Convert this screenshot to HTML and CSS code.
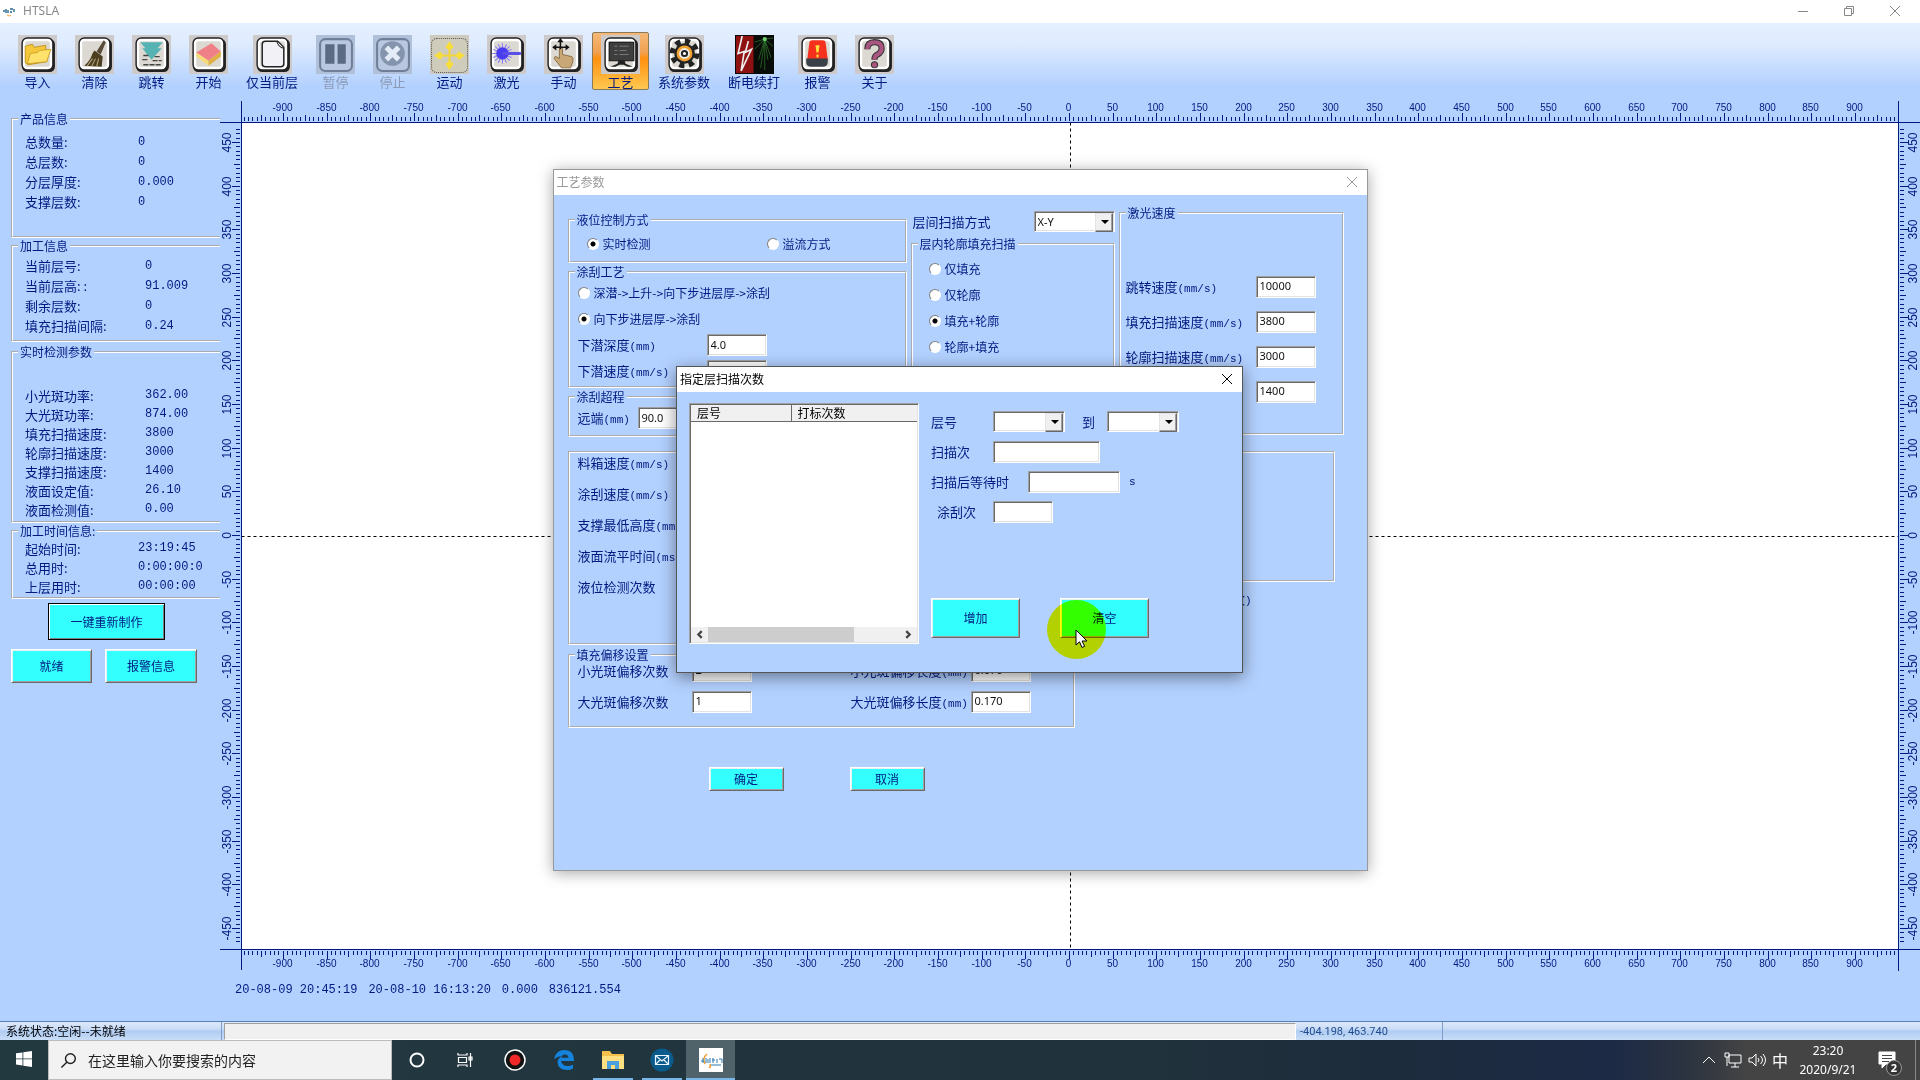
FILE: index.html
```html
<!DOCTYPE html>
<html lang="zh-CN">
<head>
<meta charset="utf-8">
<title>HTSLA</title>
<link rel="stylesheet" href="styles.css">
</head>
<body>
<svg class="defs" aria-hidden="true">
  <symbol id="frame" viewBox="0 0 38 38">
    <rect width="38" height="38" fill="#cfcaca"/>
    <rect x="4" y="4" width="32" height="32" rx="5" fill="#222"/>
    <rect x="4" y="3" width="30" height="31" rx="5" fill="#fff" stroke="#222" stroke-width="1.4"/>
    <rect x="7" y="6" width="24" height="25" rx="2" fill="#dcd9d2"/>
  </symbol>
</svg>

<div class="app">
  <header class="titlebar">
    <svg class="logo" viewBox="0 0 14 12"><path d="M1 6h2M4 4v4M6 5v3M8 4h3M8 7h2M12 4v3" stroke="#2a6a94" stroke-width="1.4"/><path d="M5 10q3 2 4 0" stroke="#f0a030" fill="none"/></svg>
    <span class="app-name">HTSLA</span>
    <div class="win-controls">
      <button type="button" aria-label="最小化"><svg viewBox="0 0 12 12"><path d="M1 6.500h10"/></svg></button>
      <button type="button" aria-label="还原"><svg viewBox="0 0 12 12"><path d="M1.500 3.500h7v7h-7zM3.500 3.500v-2h7v7h-2"/></svg></button>
      <button type="button" aria-label="关闭"><svg viewBox="0 0 12 12"><path d="M1 1l10 10M11 1L1 11"/></svg></button>
    </div>
  </header>

  <nav class="toolbar">
    <button type="button" class="tool"><svg viewBox="0 0 38 38"><use href="#frame"/><path d="M7 27V11l7-2 2 3 11-2v4l3 1-2 11-18 3z" fill="#f4c83a" stroke="#b98a12" stroke-width=".8"/><path d="M9 28l3-10 7-1 2-2 11-1-4 12z" fill="#ffe26b" stroke="#c79a20" stroke-width=".8"/></svg>导入</button>
    <button type="button" class="tool"><svg viewBox="0 0 38 38"><use href="#frame"/><path d="M28 5l2 2-5 12-4-3z" fill="#5a4a38"/><path d="M19 15l8 6-1 10-17-1q6-5 8-12z" fill="#4b3f20"/><path d="M12 30l5-7M16 31l4-8M21 31l2-8" stroke="#b8ab82"/></svg>清除</button>
    <button type="button" class="tool"><svg viewBox="0 0 38 38"><use href="#frame"/><path d="M8 7h22l-5 6h4L19 24 10 13h3z" fill="#55b3b3"/><path d="M11 20h5M10 24h6M22 21h6M20 25h9M11 29h17" stroke="#444" stroke-width="1.300" stroke-dasharray="5 1"/></svg>跳转</button>
    <button type="button" class="tool"><svg viewBox="0 0 38 38"><use href="#frame"/><path d="M7 17l15-9 9 8-12 9z" fill="#f08088"/><path d="M7 17l12 8v5L7 21z" fill="#f6dc78"/><path d="M19 25l12-9v5l-12 9z" fill="#e0b040"/></svg>开始</button>
    <button type="button" class="tool wide"><svg viewBox="0 0 38 38"><use href="#frame"/><path d="M12 6h12l6 6v16q0 3-3 3H12q-3 0-3-3V9q0-3 3-3z" fill="#f2f2f6" stroke="#222" stroke-width="1.400"/><path d="M23 6q2 6 7 7" fill="#fff" stroke="#222"/></svg>仅当前层</button>
    <button type="button" class="tool" disabled><svg viewBox="0 0 38 38"><rect width="38" height="38" fill="#b0c0d8"/><rect x="4" y="4" width="31" height="31" rx="5" fill="#b9c8e0" stroke="#6f7f98" stroke-width="2"/><path d="M9 9h9v19H9zM21 9h8v19h-8z" fill="#5c6b84"/></svg>暂停</button>
    <button type="button" class="tool" disabled><svg viewBox="0 0 38 38"><rect width="38" height="38" fill="#b0c0d8"/><rect x="4" y="4" width="31" height="31" rx="5" fill="#b9c8e0" stroke="#6f7f98" stroke-width="2"/><circle cx="19" cy="18" r="12" fill="#8494ac"/><path d="M13 12l12 12M25 12L13 24" stroke="#e4ecf8" stroke-width="5"/></svg>停止</button>
    <button type="button" class="tool"><svg viewBox="0 0 38 38"><rect width="38" height="38" fill="#cfcac0"/><rect x="1.500" y="3.500" width="35" height="33" rx="5" fill="#d0ccbc" stroke="#555" stroke-dasharray="1 1"/><path d="M19 9v22M8 20h22" stroke="#f2d43c" stroke-width="2"/><path d="M19 6l4 6-4 3-4-3zM19 34l4-6-4-3-4 3zM4 20l6-4 3 4-3 4zM34 20l-6-4-3 4 3 4z" fill="#f8de3a"/></svg>运动</button>
    <button type="button" class="tool"><svg viewBox="0 0 38 38"><use href="#frame"/><path d="M15 8v20M5 18h10M8 11l14 14M22 11L8 25M11 9l8 18M19 9l-8 18M6 14l18 8M24 14L6 22" stroke="#8a7cf0"/><circle cx="15" cy="18" r="6" fill="#4a3cf0"/><path d="M15 18h18" stroke="#5a50e8" stroke-width="3"/></svg>激光</button>
    <button type="button" class="tool"><svg viewBox="0 0 38 38"><use href="#frame"/><path d="M15 13q2-2 3 0v6l9 2q2 1 1 5l-2 6H17l-7-9q0-4 5 0z" fill="#c9a777" stroke="#7b6036" stroke-width=".8"/><path d="M16 6v8M10 12h13" stroke="#111" stroke-width="1.500"/><path d="M16 3l3 4h-6zM8 12l4-3v6zM25 12l-4-3v6z" fill="#111"/></svg>手动</button>
    <button type="button" class="tool active"><svg viewBox="0 0 38 38"><use href="#frame"/><path d="M8 7h24v18H8z" fill="#3e3e3e" stroke="#111"/><path d="M13 11h3M18 11h9M13 15h3M18 15h7M13 19h3M18 19h9" stroke="#777"/><path d="M17 25h6l1 3 7 3h-5l-4-2h-4l-4 2H9l7-3z" fill="#222"/></svg>工艺</button>
    <button type="button" class="tool wide"><svg viewBox="0 0 38 38"><use href="#frame"/><circle cx="19" cy="18" r="12" fill="none" stroke="#222" stroke-width="5" stroke-dasharray="5 4.420"/><circle cx="19" cy="18" r="10" fill="#222"/><circle cx="19" cy="18" r="6.500" fill="#eee" stroke="#f0a030" stroke-width="2.500"/><circle cx="19" cy="18" r="3.500" fill="#222"/><circle cx="19" cy="18" r="1.500" fill="#fff"/></svg>系统参数</button>
    <button type="button" class="tool wide"><svg viewBox="0 0 38 38"><path d="M0 0h38v38H0z" fill="#080c08"/><path d="M1 1h17v36H1z" fill="#8f1212"/><path d="M7 1L3 18l6-2-3 19 10-21-6 3 3-11" fill="none" stroke="#eee" stroke-width="1.600"/><path d="M29 4L19 14M29 4l-6 20M29 4v30M29 4l6 18M29 4l8 7M29 4l-10 3M29 4l8-1M29 4l3 20M29 4l-4 28" stroke="#2f7a2f" stroke-width=".7"/><circle cx="29" cy="4" r="2" fill="#6ed06e"/></svg>断电续打</button>
    <button type="button" class="tool"><svg viewBox="0 0 38 38"><use href="#frame"/><path d="M11 8q0-3 3-3h10q3 0 3 3l2 16H9z" fill="#f5301c"/><path d="M8 23h21v3q0 5-5 5H13q-5 0-5-5z" fill="#3a4048"/><path d="M17 10h4l-1 7h-2zM18 19h2v3h-2z" fill="#ffe03a"/></svg>报警</button>
    <button type="button" class="tool"><svg viewBox="0 0 38 38"><use href="#frame"/><path d="M12 14q0-7 7-7t7 6q0 4-4 6-3 1-3 5" fill="none" stroke="#333" stroke-width="6"/><path d="M12 14q0-7 7-7t7 6q0 4-4 6-3 1-3 5" fill="none" stroke="#a85580" stroke-width="4"/><circle cx="19" cy="29" r="3" fill="#a85580" stroke="#333"/></svg>关于</button>
  </nav>

  <main class="workspace">
    <aside class="sidebar">
      <fieldset class="group product">
        <legend>产品信息</legend>
        <dl class="info rows-20">
          <dt>总数量:</dt><dd>0</dd>
          <dt>总层数:</dt><dd>0</dd>
          <dt>分层厚度:</dt><dd>0.000</dd>
          <dt>支撑层数:</dt><dd>0</dd>
        </dl>
      </fieldset>
      <fieldset class="group process">
        <legend>加工信息</legend>
        <dl class="info rows-20 shifted">
          <dt>当前层号:</dt><dd>0</dd>
          <dt>当前层高: :</dt><dd>91.009</dd>
          <dt>剩余层数:</dt><dd>0</dd>
          <dt>填充扫描间隔:</dt><dd>0.24</dd>
        </dl>
      </fieldset>
      <fieldset class="group live">
        <legend>实时检测参数</legend>
        <dl class="info rows-19 shifted">
          <dt>小光斑功率:</dt><dd>362.00</dd>
          <dt>大光斑功率:</dt><dd>874.00</dd>
          <dt>填充扫描速度:</dt><dd>3800</dd>
          <dt>轮廓扫描速度:</dt><dd>3000</dd>
          <dt>支撑扫描速度:</dt><dd>1400</dd>
          <dt>液面设定值:</dt><dd>26.10</dd>
          <dt>液面检测值:</dt><dd>0.00</dd>
        </dl>
      </fieldset>
      <fieldset class="group timing">
        <legend>加工时间信息:</legend>
        <dl class="info rows-19">
          <dt>起始时间:</dt><dd>23:19:45</dd>
          <dt>总用时:</dt><dd>0:00:00:0</dd>
          <dt>上层用时:</dt><dd>00:00:00</dd>
        </dl>
      </fieldset>
      <div class="side-actions">
        <button type="button" class="btn remake">一键重新制作</button>
        <button type="button" class="btn ready">就绪</button>
        <button type="button" class="btn alarm">报警信息</button>
      </div>
    </aside>
    <section class="plot-area">
      <div class="plot" id="plot"></div>
      <p class="job-line"><span>20-08-09 20:45:19</span><span>20-08-10 16:13:20</span><span>0.000</span><span>836121.554</span></p>
    </section>
  </main>

  <footer class="statusbar">
    <span class="state">系统状态:空闲--未就绪</span>
    <span class="message"></span>
    <span class="coords">-404.198, 463.740</span>
    <span class="rest"></span>
  </footer>

  <div class="overlay">
    <section class="dialog params" role="dialog" aria-label="工艺参数">
      <header class="dialog-title inactive">工艺参数
        <button type="button" aria-label="关闭"><svg viewBox="0 0 12 12"><path d="M1 1l10 10M11 1L1 11"/></svg></button>
      </header>
      <form class="params-body">
        <div class="params-top">
          <div class="col-left">
            <fieldset class="group level">
              <legend>液位控制方式</legend>
              <div class="radio-row">
                <label class="radio"><input type="radio" name="level" checked>实时检测</label>
                <label class="radio"><input type="radio" name="level">溢流方式</label>
              </div>
            </fieldset>
            <fieldset class="group coating">
              <legend>涂刮工艺</legend>
              <label class="radio"><input type="radio" name="coat">深潜-&gt;上升-&gt;向下步进层厚-&gt;涂刮</label>
              <label class="radio"><input type="radio" name="coat" checked>向下步进层厚-&gt;涂刮</label>
              <div class="field"><label for="dive-depth">下潜深度<span class="unit">(mm)</span></label><input id="dive-depth" class="box" value="4.0"></div>
              <div class="field"><label for="dive-speed">下潜速度<span class="unit">(mm/s)</span></label><input id="dive-speed" class="box"></div>
            </fieldset>
            <fieldset class="group overrun">
              <legend>涂刮超程</legend>
              <div class="field short"><label for="far">远端<span class="unit">(mm)</span></label><input id="far" class="box" value="90.0"></div>
            </fieldset>
          </div>
          <div class="col-mid">
            <div class="pick"><label for="scan-mode">层间扫描方式</label><span class="select"><select id="scan-mode"><option>X-Y</option></select></span></div>
            <fieldset class="group contour">
              <legend>层内轮廓填充扫描</legend>
              <label class="radio"><input type="radio" name="fill">仅填充</label>
              <label class="radio"><input type="radio" name="fill">仅轮廓</label>
              <label class="radio"><input type="radio" name="fill" checked>填充+轮廓</label>
              <label class="radio"><input type="radio" name="fill">轮廓+填充</label>
            </fieldset>
          </div>
          <fieldset class="group laser">
            <legend>激光速度</legend>
            <div class="field"><label for="jump">跳转速度<span class="unit">(mm/s)</span></label><input id="jump" class="box" value="10000"></div>
            <div class="field"><label for="fill-speed">填充扫描速度<span class="unit">(mm/s)</span></label><input id="fill-speed" class="box" value="3800"></div>
            <div class="field"><label for="contour-speed">轮廓扫描速度<span class="unit">(mm/s)</span></label><input id="contour-speed" class="box" value="3000"></div>
            <div class="field lone"><input class="box" aria-label="支撑扫描速度" value="1400"></div>
          </fieldset>
        </div>
        <div class="params-mid">
          <div class="etched tank">
            <p>料箱速度<span class="unit">(mm/s)</span></p>
            <p>涂刮速度<span class="unit">(mm/s)</span></p>
            <p>支撑最低高度<span class="unit">(mm)</span></p>
            <p>液面流平时间<span class="unit">(ms)</span></p>
            <p>液位检测次数</p>
          </div>
          <div class="spare">
            <div class="etched"></div>
            <p>数<span class="unit">)</span></p>
          </div>
        </div>
        <fieldset class="group offset">
          <legend>填充偏移设置</legend>
          <div class="offset-grid">
            <label for="small-n">小光斑偏移次数</label><input id="small-n" class="box" value="2">
            <label for="small-l">小光斑偏移长度<span class="unit">(mm)</span></label><input id="small-l" class="box" value="0.070">
            <label for="big-n">大光斑偏移次数</label><input id="big-n" class="box" value="1">
            <label for="big-l">大光斑偏移长度<span class="unit">(mm)</span></label><input id="big-l" class="box" value="0.170">
          </div>
        </fieldset>
        <div class="dialog-actions">
          <button type="button" class="btn">确定</button>
          <button type="button" class="btn">取消</button>
        </div>
      </form>
    </section>
  </div>

  <div class="overlay front">
    <section class="dialog layers" role="dialog" aria-label="指定层扫描次数">
      <header class="dialog-title">指定层扫描次数
        <button type="button" aria-label="关闭"><svg viewBox="0 0 12 12"><path d="M1 1l10 10M11 1L1 11"/></svg></button>
      </header>
      <div class="layers-body">
        <div class="list">
          <table>
            <thead><tr><th class="c-layer">层号</th><th>打标次数</th></tr></thead>
          </table>
          <div class="scrollbar">
            <svg viewBox="0 0 8 8"><path d="M6 1L3 4l3 3"/></svg>
            <span class="track"><span class="thumb"></span></span>
            <svg viewBox="0 0 8 8"><path d="M2 1l3 3-3 3"/></svg>
          </div>
        </div>
        <form class="layers-form">
          <div class="line">
            <label for="from">层号</label><span class="select"><select id="from"><option></option></select></span>
            <label for="to" class="to">到</label><span class="select"><select id="to"><option></option></select></span>
          </div>
          <div class="line"><label for="times">扫描次</label><input id="times" class="box times"></div>
          <div class="line wait"><label for="wait">扫描后等待时</label><input id="wait" class="box"><span class="unit">s</span></div>
          <div class="line coats"><label for="coats">涂刮次</label><input id="coats" class="box"></div>
          <div class="big-actions">
            <button type="button" class="btn">增加</button>
            <button type="button" class="btn">清空</button>
          </div>
        </form>
      </div>
      <span class="click-halo"></span>
      <svg class="cursor" viewBox="0 0 13 20"><path d="M1 1v15l3.500-3.200 2.500 5.700 2.600-1.200-2.500-5.300H12z" fill="#fff" stroke="#000"/></svg>
    </section>
  </div>
</div>

<footer class="taskbar">
  <button type="button" class="start" aria-label="开始"><svg viewBox="0 0 16 16"><path d="M0 2.300l6.500-.9v6.100H0zM7.300 1.300L16 0v7.500H7.300zM0 8.300h6.500v6.200L0 13.600zM7.300 8.300H16V16l-8.700-1.300z" fill="#fff"/></svg></button>
  <label class="search"><svg viewBox="0 0 18 18"><circle cx="11" cy="7" r="5.200"/><path d="M7.200 10.800L1.500 16.500"/></svg><input type="text" placeholder="在这里输入你要搜索的内容" aria-label="搜索"></label>
  <div class="tasks">
    <button type="button" aria-label="Cortana"><svg viewBox="0 0 24 24"><circle cx="12" cy="12" r="6.500" fill="none" stroke="#fff" stroke-width="2"/></svg></button>
    <button type="button" aria-label="任务视图"><svg viewBox="0 0 24 24"><path d="M4 5v2h9V5M4 19v-2h9v2M4.500 9.500h8v5h-8zM16.500 5v14M15 9h3v3h-3z" fill="none" stroke="#fff" stroke-width="1.200"/></svg></button>
    <button type="button" aria-label="录屏"><svg viewBox="0 0 24 24"><circle cx="12" cy="12" r="10" fill="#111" stroke="#fff" stroke-width="1.500"/><circle cx="12" cy="12" r="5.500" fill="#f02828"/></svg></button>
    <button type="button" aria-label="Edge"><svg viewBox="0 0 24 24"><path d="M2 11Q4 2 12.500 2 22 2 22 13H9q1 5 7 5 3 0 5-1.500v4Q18.500 22 15 22 6 22 5.500 14 6 10 10 8 6.500 8 2 11zM9.300 9.800h7.200Q16 6.500 13 6.500 10 6.500 9.300 9.800z" fill="#1583dd"/></svg></button>
    <button type="button" class="open" aria-label="文件资源管理器"><svg viewBox="0 0 24 24"><path d="M1 3h8l2 3h12v15H1z" fill="#f3c04b"/><path d="M1 8h22v13H1z" fill="#ffdf80"/><path d="M6 21v-8h12v8h-4v-4h-4v4z" fill="#4a9fdc"/></svg></button>
    <button type="button" class="open" aria-label="邮件"><svg viewBox="0 0 24 24"><circle cx="12" cy="12" r="11.500" fill="#0a5a8c"/><path d="M5.500 7.500h13v9h-13zM5.500 7.500L12 13l6.500-5.500M5.500 16.500l5-5M18.500 16.500l-5-5" fill="none" stroke="#e8f4ff" stroke-width="1.200"/></svg></button>
    <button type="button" class="open current" aria-label="HTSLA"><svg viewBox="0 0 24 24"><path d="M0 0h24v24H0z" fill="#fff"/><path d="M8 6q-5 4-2 10M10 19q2 2 1-3" stroke="#f0a030" fill="none" stroke-width="1.500"/><path d="M2 13h3M4 10v5M7 10v5M9 11v4M11 10v5M13 12h3M14 10v5M18 11v4M20 11h3v4M12 17h10" stroke="#2a7ab0" fill="none"/></svg></button>
  </div>
  <div class="tray">
    <svg viewBox="0 0 18 18"><path d="M3 12l6-6 6 6"/></svg>
    <svg viewBox="0 0 18 18"><path d="M5 4h12v8H5zM11 12v4M7 16h8M1 2h4v4H1zM3 6v9"/></svg>
    <svg viewBox="0 0 18 18"><path d="M1 7h3l4-4v12l-4-4H1zM10 7q2 2 0 4M12.500 5q4 4 0 8M15 3q5 6 0 12"/></svg>
    <span class="ime">中</span>
    <time class="clock">23:20<br>2020/9/21</time>
    <span class="notices"><svg viewBox="0 0 18 18"><path d="M1 1h16v12H8l-4 4v-4H1z" fill="#fff"/><path d="M4 4.500h10M4 7.500h10M4 10.500h7" stroke="#444"/></svg><b>2</b></span>
  </div>
</footer>
<script src="ruler.js"></script>
</body>
</html>
```
FILE: styles.css
```css
* { box-sizing: border-box; }

:root {
  --panel: #b3d1ff;
  --ink: #001a80;
  --cyan: #33ffff;
}

body {
  margin: 0;
  min-height: 100vh;
  display: flex;
  flex-direction: column;
  background: var(--panel);
  color: var(--ink);
  font: 12px/16px "Noto Sans CJK SC", sans-serif;
}

p, dl, dd { margin: 0; }
button, input, select { font: inherit; color: inherit; }
button { padding: 0; border: 0; background: none; }
.defs { display: none; }

.app {
  flex: 1;
  position: relative;
  display: flex;
  flex-direction: column;
}

/* window title */
.titlebar {
  display: flex;
  align-items: center;
  height: 23px;
  padding: 0 2px 1px;
  background: #fff;
  color: #888;
}
.logo { width: 14px; height: 12px; margin-right: 7px; }
.app-name { font-family: "Noto Sans", sans-serif; }
.win-controls { margin-left: auto; display: flex; }
.win-controls button { width: 46px; height: 20px; display: grid; place-items: center; }
.win-controls svg, .dialog-title svg {
  width: 12px;
  height: 12px;
  fill: none;
  stroke: currentColor;
}

/* toolbar */
.toolbar {
  display: flex;
  height: 68px;
  padding: 9px 9px 0;
  background: linear-gradient(#e4efff, #dfecff 30%, #b3d1ff 92%);
}
.tool {
  width: 57px;
  height: 58px;
  display: flex;
  flex-direction: column;
  align-items: center;
  padding-top: 3px;
  font-size: 13px;
  line-height: 16px;
  white-space: nowrap;
}
.tool svg { width: 39px; height: 39px; flex: none; }
.tool.wide { width: 70px; }
.tool:disabled { color: #8c9bb5; }
.tool.active {
  border: 1px solid #8a7a5a;
  border-radius: 2px;
  padding-top: 2px;
  background: linear-gradient(#f5b878, #f0a050 35%, #ff9010 45%, #ffc850);
}

/* etched groups */
.group, .etched {
  min-width: 0;
  margin: 0;
  padding: 0;
  border: 2px groove #fff;
}
legend { margin-left: 5px; padding: 0 2px; }

/* main area */
.workspace { flex: 1; display: flex; }
.sidebar {
  width: 220px;
  flex: none;
  padding: 20px 0 0 11px;
}
.sidebar .group { border-right: 0; }
.product { height: 127px; }
.process { height: 104px; }
.sidebar .live { height: 179px; margin-top: 2px; }
.timing { height: 76px; }

.info {
  display: grid;
  grid-template-columns: 113px 1fr;
  padding-left: 12px;
  font-size: 13px;
}
.info.shifted { grid-template-columns: 120px 1fr; }
.info dd { font: 12px "Liberation Mono", monospace; line-height: inherit; }
.rows-20 { line-height: 20px; }
.rows-19 { line-height: 19px; }
.product .info { padding-top: 5px; }
.process .info { padding-top: 2px; }
.live .info { padding-top: 26px; }

.side-actions {
  display: flex;
  flex-wrap: wrap;
  gap: 9px 13px;
  padding-top: 4px;
}

.btn {
  border: 1px solid;
  border-color: #fff #696969 #696969 #fff;
  box-shadow: inset 1px 1px #e3f3f3, inset -1px -1px #a0a0a0;
  background: var(--cyan);
}
.remake {
  width: 117px;
  height: 37px;
  margin: 0 50px 0 37px;
  border-color: #000;
  box-shadow: inset 1px 1px #fff, inset -1px -1px #808080;
}
.ready { width: 81px; height: 34px; }
.alarm { width: 92px; height: 34px; }

.plot-area { flex: 1; min-width: 0; display: flex; flex-direction: column; padding-top: 10px; }
.plot { flex: 1; min-height: 0; position: relative; }
.plot svg { position: absolute; inset: 0; width: 100%; height: 100%; }
.plot .sheet { fill: #fff; }
.plot .lines { stroke: #001a80; fill: none; }
.plot .axis { stroke: #000; stroke-dasharray: 3 3; }
.plot text { font: 10px "Liberation Sans", sans-serif; fill: #001a80; text-anchor: middle; }
.plot .side { font-size: 12px; }

.job-line {
  display: flex;
  gap: 11px;
  height: 50px;
  padding: 11px 0 0 15px;
  font: 12px/16px "Liberation Mono", monospace;
}

/* status bar */
.statusbar {
  display: flex;
  height: 19px;
  border-top: 1px solid #5b7fb5;
  background: linear-gradient(#dce9fb, #c9dcf6 40%, #b0ccf2 50%, #c9def8);
  line-height: 18px;
}
.statusbar .state { width: 222px; padding-left: 6px; color: #000; border-right: 1px solid #7f9dc8; margin-right: 2px; }
.statusbar .message { flex: 1; margin-top: 1px; border: 1px solid; border-color: #a0a0a0 #fff #fff #a0a0a0; background: #f0f0f0; }
.statusbar .coords { width: 147px; padding: 1px 0 0 4px; border-right: 1px solid #7f9dc8; font-family: Roboto, sans-serif; font-size: 11px; color: #1f4a8f; }
.statusbar .rest { width: 477px; }

/* dialogs */
.overlay {
  position: absolute;
  inset: 0;
  display: grid;
  place-items: center;
}
.front { padding: 0 1px 2px 0; }
.dialog { position: relative; background: var(--panel); }
.dialog-title {
  display: flex;
  justify-content: space-between;
  align-items: center;
  height: 25px;
  padding: 0 9px 1px 3px;
  background: #fff;
  color: #000;
}
.dialog-title.inactive { color: #999; }
.dialog-title button { width: 12px; height: 12px; display: grid; }

.box {
  width: 60px;
  height: 22px;
  padding: 0 3px 2px;
  border: 1px solid;
  border-color: #a0a0a0 #fff #fff #a0a0a0;
  box-shadow: inset 1px 1px #696969, inset -1px -1px #e3e3e3;
  border-radius: 0;
  background: #fff;
  color: #111;
  font: 11px "Noto Sans", sans-serif;
}

.select { position: relative; display: block; width: 81px; height: 21px; }
.select select {
  appearance: none;
  width: 100%;
  height: 100%;
  padding: 0 3px;
  border: 1px solid;
  border-color: #a0a0a0 #fff #fff #a0a0a0;
  box-shadow: inset 1px 1px #696969, inset -1px -1px #e3e3e3;
  border-radius: 0;
  background: #fff;
  color: #111;
  font: 11px "Noto Sans", sans-serif;
}
.select::before {
  content: "";
  position: absolute;
  right: 2px;
  top: 2px;
  width: 16px;
  height: 17px;
  border: 1px solid;
  border-color: #e3e3e3 #696969 #696969 #e3e3e3;
  box-shadow: inset -1px -1px #a0a0a0;
  background: #f0f0f0;
  pointer-events: none;
}
.select::after {
  content: "";
  position: absolute;
  right: 6px;
  top: 9px;
  border: 4px solid transparent;
  border-top-color: #000;
  border-bottom: 0;
  pointer-events: none;
}

.radio { display: flex; align-items: center; gap: 4px; height: 26px; }
.radio input {
  appearance: none;
  width: 12px;
  height: 12px;
  margin: 0;
  border: 1px solid;
  border-color: #808080 #fff #fff #808080;
  border-radius: 50%;
  background: #fff;
}
.radio input:checked { background: radial-gradient(circle, #000 2px, #fff 3px); }

.unit { font: 11px "Liberation Mono", monospace; }
.field { display: flex; align-items: center; height: 26px; font-size: 13px; }
.field label { width: 129px; white-space: nowrap; }

/* process parameters */
.params {
  width: 815px;
  min-height: 702px;
  border: 1px solid #999;
  box-shadow: 0 2px 14px rgba(0, 0, 0, .35);
}
.params-body { padding: 10px 22px 0 14px; }
.params-top { display: grid; grid-template-columns: 339px 204px 1fr; gap: 4px; height: 232px; }
.col-left { display: grid; gap: 1px; padding-top: 7px; align-content: start; }
.level { height: 51px; }
.radio-row { display: grid; grid-template-columns: 180px 1fr; padding: 3px 0 0 17px; }
.coating { height: 124px; }
.coating .radio, .coating .field, .overrun .field { padding-left: 8px; }
.overrun { height: 48px; }
.field.short label { width: 60px; }
.col-mid { padding-top: 6px; }
.pick { display: flex; align-items: center; padding-left: 2px; font-size: 13px; }
.pick label { width: 121px; }
.contour { height: 200px; margin-top: 4px; }
.contour .radio { padding-left: 16px; }
.contour legend { margin-bottom: 4px; }
.laser { height: 230px; width: 225px; }
.laser .field { height: 35px; padding-left: 5px; }
.laser legend { margin-bottom: 48px; }
.laser .field label { width: 130px; }
.laser .lone { padding-left: 135px; }

.params-mid { display: flex; justify-content: space-between; width: 767px; margin-top: 14px; font-size: 13px; }
.tank { width: 400px; height: 194px; padding-left: 8px; line-height: 31px; }
.tank p { height: 31px; }
.tank p:first-child { margin-top: -6px; }
.spare { width: 335px; }
.spare .etched { height: 131px; }
.spare p { padding: 9px 83px 0 0; text-align: right; }

.offset { width: 507px; height: 81px; margin-top: 2px; }
.offset-grid {
  display: grid;
  grid-template-columns: 114px 159px 120px 60px;
  grid-auto-rows: 31px;
  align-items: center;
  margin-top: -8px;
  padding-left: 8px;
  font-size: 13px;
}
.dialog-actions { display: flex; gap: 66px; padding: 39px 0 0 141px; }
.dialog-actions .btn { width: 75px; height: 24px; }

/* per-layer scan counts */
.layers {
  width: 567px;
  height: 307px;
  border: 1px solid #555;
  box-shadow: 0 4px 16px rgba(0, 0, 0, .45);
}
.layers-body { display: flex; padding: 11px 12px 0; }
.list {
  width: 230px;
  height: 241px;
  display: flex;
  flex-direction: column;
  justify-content: space-between;
  border: 1px solid;
  border-color: #a0a0a0 #fff #fff #a0a0a0;
  box-shadow: inset 1px 1px #696969, inset -1px -1px #e3e3e3;
  padding: 1px;
  background: #fff;
}
.list table { width: 100%; border-collapse: collapse; color: #000; }
.list th {
  height: 17px;
  padding: 0 0 0 6px;
  border-bottom: 1px solid #696969;
  background: #f0f0f0;
  font-weight: normal;
  line-height: 15px;
  text-align: left;
}
.list .c-layer { width: 100px; border-right: 1px solid #696969; }
.scrollbar { display: flex; align-items: center; height: 15px; background: #f0f0f0; }
.scrollbar svg { width: 9px; height: 9px; margin: 0 4px; fill: none; stroke: #444; stroke-width: 2; }
.track { flex: 1; height: 15px; }
.thumb { display: block; width: 76%; height: 100%; background: #cdcdcd; }

.layers-form { flex: 1; padding: 4px 0 0 12px; font-size: 13px; }
.line { display: flex; align-items: center; height: 30px; }
.line label { width: 62px; }
.line .select { width: 72px; }
.line .to { width: 42px; padding-left: 17px; }
.line .times { width: 107px; }
.line.wait label { width: 97px; }
.wait .box { width: 92px; margin-right: 9px; }
.coats label { padding-left: 6px; }
.big-actions { display: flex; gap: 40px; padding-top: 71px; font-size: 12px; }
.big-actions .btn { width: 89px; height: 40px; }

.click-halo {
  position: absolute;
  left: 370px;
  top: 233px;
  width: 59px;
  height: 59px;
  border-radius: 50%;
  background: #ff0;
  mix-blend-mode: multiply;
}
.cursor { position: absolute; left: 398px; top: 262px; width: 13px; height: 20px; }

/* taskbar */
.taskbar {
  display: flex;
  height: 40px;
  background: linear-gradient(90deg, #233940, #20323c 60%, #1d2c3c 72%, #1c2a46 84%, #2c343f 88%, #444 91%);
  color: #fff;
}
.start { width: 48px; }
.start svg { width: 16px; height: 16px; }
.search {
  display: flex;
  align-items: center;
  width: 344px;
  padding-left: 11px;
  gap: 11px;
  border: 1px solid #bbb;
  background: #f2f2f2;
}
.search svg { width: 17px; height: 17px; fill: none; stroke: #222; stroke-width: 1.5; }
.search input { flex: 1; padding: 0; border: 0; background: none; font-size: 14px; }
.search input::placeholder { color: #222; }
.tasks { display: flex; }
.tasks button { width: 49px; display: grid; place-items: center; }
.tasks svg { width: 24px; height: 24px; }
.tasks .open {
  background: linear-gradient(#78b6e8, #78b6e8) center bottom / 40px 2px no-repeat;
}
.tasks .current { background-color: #50626a; background-size: 100% 2px; }
.tray { display: flex; align-items: center; gap: 6px; margin-left: auto; padding-right: 4px; }
.tray svg { width: 18px; height: 18px; fill: none; stroke: #fff; }
.ime { font-size: 16px; }
.clock { width: 68px; font: 12px/19px "Noto Sans", sans-serif; text-align: center; }
.notices { position: relative; width: 48px; height: 40px; padding: 11px 0 0 10px; border-right: 1px solid #888; }
.notices b {
  position: absolute;
  left: 18px;
  top: 20px;
  width: 16px;
  height: 16px;
  border: 1px solid #999;
  border-radius: 50%;
  background: #333;
  font: bold 11px/14px "Noto Sans", sans-serif;
  text-align: center;
}
```
FILE: ruler.js
```js
// Draws the build platform sheet with rulers on all four sides.
const plot = document.getElementById('plot');
const EDGE = 21;      // ruler thickness in px
const SPAN = 1897;    // units shown across the sheet

function draw() {
  const w = plot.clientWidth, h = plot.clientHeight;
  const l = EDGE + 0.5, t = EDGE + 0.5, r = w - EDGE - 0.5, b = h - EDGE - 0.5;
  const scale = (r - l) / SPAN;
  const cx = Math.round(w / 2) + 0.5, cy = Math.round(h / 2) + 0.5;
  const snap = v => Math.floor(v) + 0.5;
  let ticks = `M0 ${t}H${w}M0 ${b}H${w}M${l} 0V${h - 1}M${r} 0V${h}`;
  let labels = '';
  const len = v => v % 50 === 0 ? 8 : v % 25 === 0 ? 6 : 4;

  for (let v = -945; v <= 945; v += 5) {
    const x = snap(w / 2 + v * scale - 0.5);
    ticks += `M${x} ${t - 1.5}v${-len(v)}M${x} ${b + 1.5}v${len(v)}`;
    if (v % 50 === 0) {
      labels += `<text x="${x - 1}" y="10">${v}</text><text x="${x - 1}" y="${h - 4}">${v}</text>`;
    }
  }
  const top = Math.floor((h / 2 - EDGE) / scale / 5) * 5 - 5;
  for (let v = -top; v <= top; v += 5) {
    const y = snap(h / 2 - v * scale - 0.5);
    ticks += `M${l - 1.5} ${y}h${-len(v)}M${r + 1.5} ${y}h${len(v)}`;
    if (v % 50 === 0) {
      labels += `<text class="side" transform="translate(11 ${y})rotate(-90)">${v}</text>`;
      labels += `<text class="side" transform="translate(${w - 3} ${y})rotate(-90)">${v}</text>`;
    }
  }
  plot.innerHTML = `<svg>
    <rect class="sheet" x="${l}" y="${t}" width="${r - l}" height="${b - t}"/>
    <path class="axis" d="M${l} ${cy}H${r}M${cx} ${t}V${b}"/>
    <path class="lines" d="${ticks}"/>${labels}</svg>`;
}

new ResizeObserver(draw).observe(plot);
draw();
```
